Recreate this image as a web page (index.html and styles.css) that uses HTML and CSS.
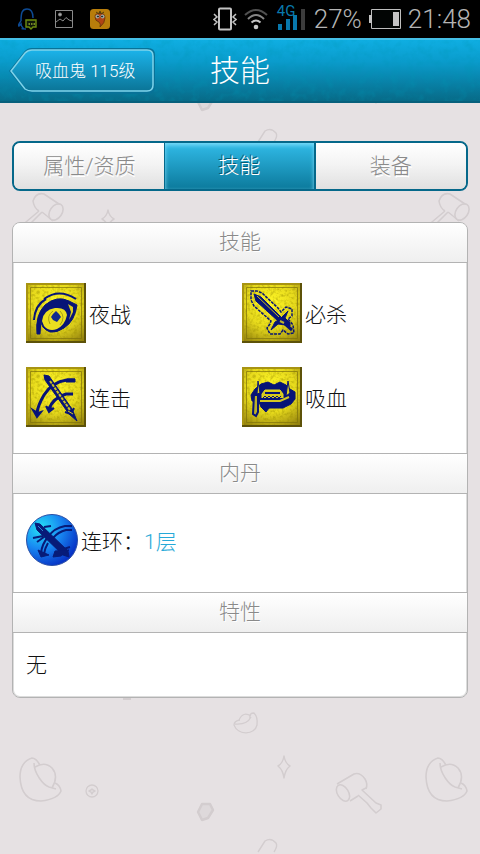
FILE: index.html
```html
<!doctype html>
<html lang="zh-CN">
<head>
<meta charset="utf-8" />
<meta name="viewport" content="width=device-width, initial-scale=1" />
<title>技能</title>
<link rel="stylesheet" href="styles.css">
</head>
<body>
<!-- gradients shared by the skill icons -->
<svg class="defs" width="0" height="0" aria-hidden="true">
  <defs>
    <radialGradient id="gold" cx=".48" cy=".35" r=".75">
      <stop offset="0" stop-color="#fff726"/>
      <stop offset=".55" stop-color="#e6d91c"/>
      <stop offset="1" stop-color="#94820f"/>
    </radialGradient>
    <filter id="grain" x="0" y="0" width="100%" height="100%">
      <feTurbulence type="fractalNoise" baseFrequency=".35" numOctaves="2" seed="4"/>
      <feColorMatrix values="0 0 0 0 .3  0 0 0 0 .25  0 0 0 0 0  1.2 0 0 0 -.52"/>
    </filter>
    <filter id="felt" x="0" y="0" width="100%" height="100%">
      <feTurbulence type="fractalNoise" baseFrequency=".12" numOctaves="3" seed="8"/>
      <feColorMatrix values="0 0 0 0 0  0 0 0 0 .3  0 0 0 0 .45  1.6 0 0 0 -.7"/>
    </filter>
    <g id="plate">
      <rect width="60" height="60" fill="url(#gold)"/>
      <rect width="60" height="60" filter="url(#grain)"/>
      <path d="M1 60V1H60" fill="none" stroke="#a89412" stroke-width="2"/>
      <path d="M0 59H59V0" fill="none" stroke="#5d5209" stroke-width="2"/>
      <path d="M4.500 55.500V4.500H55.500V55.500Z" fill="none" stroke="#7d700c" stroke-width="1" opacity=".7"/>
    </g>
  </defs>
</svg>

<div class="status">
  <div class="status-left">
    <svg width="20" height="22" viewBox="0 0 20 22" fill="none">
      <path d="M3 13C3 5 4 1 9 1s6 4 6 9M3 13c-2 2-3 5-2 5l2-2c0 2 1 3 2 4-2 1 0 1 3 1" stroke="#0d4a94" stroke-width="1.500"/>
      <path d="M8 12H18V19H15L13 21L11 19H8Z" fill="#10180a" stroke="#6d8d10" stroke-width="1.400"/>
      <path d="M10.500 16h1.500m1 0h1.500m1 0h1.500" stroke="#94ac30" stroke-width="1.500"/>
    </svg>
    <svg width="18" height="18" viewBox="0 0 18 18" fill="none" stroke="#8a8a8a">
      <path d="M.5 .5H17.500V17.500H.5Z"/>
      <path d="M1 12L5 9L8 11L11 7.500L14 10L17 11"/>
      <circle cx="5" cy="4.500" r="1.500" fill="#aaa"/>
    </svg>
    <svg width="20" height="20" viewBox="0 0 20 20">
      <rect width="20" height="20" rx="3.500" fill="#b87d0b"/>
      <path d="M5 8Q5 4 10 4Q15 4 15 9Q15 14 10 18Q11 15 9 13Q5 12 5 8Z" fill="#b04314" stroke="#573109" stroke-width=".7"/>
      <path d="M6 3l3 2 1-3 1 3 3-2" fill="none" stroke="#553d0d"/>
      <circle cx="7.500" cy="7.500" r="2" fill="#99a6a0"/><circle cx="12.500" cy="7.500" r="2" fill="#99a6a0"/>
      <circle cx="8" cy="7.500" r=".8"/><circle cx="12" cy="7.500" r=".8"/>
    </svg>
  </div>
  <div class="status-right">
    <svg width="24" height="24" viewBox="0 0 24 24" fill="none" stroke="#c4c4c4" stroke-width="1.500">
      <rect x="6" y="1.500" width="12" height="21" rx="1" stroke-width="2"/>
      <path d="M1 7l3 3-3 2.500 3 2.500-3 3M23 7l-3 3 3 2.500-3 2.500 3 3"/>
    </svg>
    <svg width="24" height="22" viewBox="0 0 24 22" fill="none" stroke-width="2">
      <path d="M1 7Q12-3 23 7" stroke="#505050"/>
      <path d="M4 11Q12 3 20 11" stroke="#858585"/>
      <path d="M7.500 14.500Q12 10.500 16.500 14.500" stroke="#c4c4c4"/>
      <circle cx="12" cy="19" r="2.300" fill="#c8c8c8"/>
    </svg>
    <div class="signal">
      <span>4G</span>
      <svg width="28" height="22" viewBox="0 0 28 22">
        <path d="M1 16h4v6H1zM9 11h4v11H9zM16 7h4v15h-4z" fill="#0878ad"/>
        <path d="M24 1h4v21h-4z" fill="#3c3c3c"/>
      </svg>
    </div>
    <span class="num">27%</span>
    <svg width="32" height="20" viewBox="0 0 32 20">
      <path d="M2.500 .5H31.500V19.500H2.500Z" fill="#020504" stroke="#bebebe"/>
      <path d="M0 6h3v8H0zM24 3h6v14h-6z" fill="#c4c4c4"/>
    </svg>
    <span class="num">21:48</span>
  </div>
</div>

<div class="page">
  <svg class="pattern" width="100%" height="100%" aria-hidden="true">
    <defs>
      <pattern id="doodles" y="75" width="406" height="710" patternUnits="userSpaceOnUse">
        <g fill="none" stroke="#d3cdcf" stroke-width="1.600" stroke-linejoin="round">
          <!-- mallets -->
          <path d="M337 671L354 661Q360 659 365 666Q368 671 366 676M350 688L358 683"/>
          <ellipse cx="343" cy="680" rx="5.500" ry="9" transform="rotate(-32 343 680)"/>
          <path d="M358 682L367 690L371 695L376 700L381 696V692L376 690L362 677L366 675"/>
          <path d="M59 91L44 81Q36 79 33 88Q34 95 39 98M47 103L53 108"/>
          <ellipse cx="56" cy="99" rx="6" ry="9" transform="rotate(35 56 99)"/>
          <path d="M39 98L20 114M42 99L27 114M42 99L47 103"/>
          <path d="M258 29L265 18Q271 14 276 20Q278 23 274 29" stroke-width="1.400"/>
          <!-- gold ingots -->
          <path d="M40 652Q36 645 32 645Q20 649 20 664Q21 688 41 688Q58 686 61 678Q60 672 55 670"/>
          <path d="M35 654Q45 648 52 655Q59 663 52 675M34 650C34 660 43 672 49 674L56 676"/>
          <path d="M240 607Q234 608 234 612C238 623 255 622 257 612Q258 604 254 600Q249 600 250 605M239 607Q243 598 251 603M235 611Q247 612 251 604" stroke-width="1.300"/>
          <!-- coin and sparkles -->
          <circle cx="92" cy="678" r="6" stroke-width="1.300"/>
          <path d="M92 676l1 1 2 1-2 1-1 2-1-2-2-1 2-1z" stroke-width="1.500"/>
          <path d="M284 643Q285 650 290 653Q285 657 284 665Q283 657 278 653Q283 650 284 643Z" stroke-width="1.500"/>
          <path d="M108 97Q109 103 114 106Q109 109 108 114Q107 109 102 106Q107 103 108 97Z" stroke-width="1.500"/>
          <!-- nut -->
          <path d="M202 691h8l3 6-5 8-6 2-4-8z" stroke-width="2.500" fill="#ded9db"/>
          <path d="M123 586h8" stroke-width="2"/>
        </g>
      </pattern>
    </defs>
    <rect width="100%" height="100%" fill="url(#doodles)"/>
  </svg>

  <header class="topbar">
    <svg class="felt" width="100%" height="100%" aria-hidden="true"><rect width="100%" height="100%" filter="url(#felt)"/></svg>
    <button class="back" type="button">
      <svg class="back-shape" viewBox="0 0 146 46" aria-hidden="true">
        <defs>
          <linearGradient id="backFill" x1="0" y1="0" x2="0" y2="1">
            <stop offset="0" stop-color="#1bb3ea"/>
            <stop offset="1" stop-color="#0b7597"/>
          </linearGradient>
        </defs>
        <path d="M0 23L15 4Q18 0 23 0H139Q146 0 146 7V38Q146 46 139 46H23Q18 46 15 42Z" fill="#087298"/>
        <path d="M2 23L16 5Q19 2 23 2H138Q144 2 144 8V37Q144 43 138 43H23Q19 43 16 41Z" fill="url(#backFill)" stroke="#7fd3ea" stroke-width="1.500"/>
      </svg>
      <span>吸血鬼 115级</span>
    </button>
    <h1>技能</h1>
  </header>

  <main>
    <nav class="tabs">
      <button type="button">属性/资质</button>
      <button type="button" class="active">技能</button>
      <button type="button">装备</button>
    </nav>

    <div class="card">
      <section>
        <h2>技能</h2>
        <ul class="skills">
          <li>
            <svg class="icon" viewBox="0 0 60 60" fill="none" stroke="#071477">
              <use href="#plate" stroke="none"/>
              <path d="M8 37Q9 22 20 16M18 16Q33 5 50 16" stroke-width="2"/>
              <path d="M11 51Q9 32 19 22Q31 12 43 18L51 22Q49 38 38 45Q31 50 24 49Q14 45 15 36L14 51Z" fill="#071477"/>
              <path d="M16 38Q17 27 29 25Q40 24 41 32Q39 42 31 46Q23 49 18 43Z" fill="#ebdf20" stroke="none"/>
              <path d="M24 41Q20 33 27 28M34 28Q40 34 34 42" stroke="#a8a013"/>
              <path d="M30 28L33 31L35 34L31 39L27 37L25 34L27 31Z" fill="#102a8e" stroke="none"/>
              <path d="M42 21L47 24L47 29L43 37L45 29Z" fill="#d9cc20" stroke="none"/>
            </svg>
            <span>夜战</span>
          </li>
          <li>
            <svg class="icon" viewBox="0 0 60 60" fill="none" stroke="#071477">
              <use href="#plate" stroke="none"/>
              <path d="M9 8L15 8L20 10L36 25L39 29L44 24L50 26L50 33L46 36L51 42L52 50L46 51L41 47L38 51L28 51L25 45L28 41L29 38L12 23L9 17Z" stroke-width="1.500" stroke-dasharray="3 1"/>
              <path d="M12 11L19 14L39 34L36 38L14 18Z" fill="#071477"/>
              <path d="M15 13L37 34" stroke="#c9bd1b"/>
              <path d="M46 28L43 35L48 40V43L44 42L36 41L29 47L33 39L38 36Z" fill="#071477"/>
              <path d="M42 40L50 47" stroke-width="3"/>
              <path d="M38 38L42 40" stroke="#beb32b" stroke-width="2"/>
            </svg>
            <span>必杀</span>
          </li>
          <li>
            <svg class="icon" viewBox="0 0 60 60" fill="none" stroke="#071477">
              <use href="#plate" stroke="none"/>
              <path d="M49 13H41Q26 15 18 28Q12 38 11 46" stroke-width="3"/>
              <path d="M41 12H49V15H40Z" fill="#071477"/>
              <path d="M7 43L11 50L15 45L12 46Z" fill="#071477" stroke-width="2"/>
              <path d="M47 27H40Q27 31 23 42" stroke-width="3"/>
              <path d="M20 39L23 45L28 41" fill="#071477" stroke-width="2"/>
              <path d="M18 8L23 9L46 42L51 54L43 47L19 13Z" fill="#071477"/>
              <path d="M24 14L44 43" stroke="#cfc321" stroke-width="2" stroke-dasharray="3 1"/>
              <path d="M39 45L45 47L48 41" stroke-width="2"/>
              <path d="M42 44L47 47" stroke="#d8cb21"/>
            </svg>
            <span>连击</span>
          </li>
          <li>
            <svg class="icon" viewBox="0 0 60 60" fill="none" stroke="#071477">
              <use href="#plate" stroke="none"/>
              <path d="M9 28L13 22L19 17L26 15L32 18L38 15L44 18L48 22L53 25L53 32L49 37L41 41L27 41L24 45L19 40L17 35L10 34Z" fill="#071477"/>
              <path d="M20 31V27L23 23H38L41 27V31" fill="#d6ca1b" stroke="#e5d921"/>
              <path d="M23 26H38" stroke-width="2"/>
              <path d="M21 31l2-2 2 2 2-2 2 2 2-2 2 2 2-2 2 2 2-2"/>
              <path d="M16 14L18 26L15 27ZM46 14L48 26L44 29Z" fill="#ddd01d"/>
              <path d="M12 28H16V45L14 49L11 47Z" fill="#bbb026" stroke-width="2"/>
              <path d="M18 34H38L47 30" stroke="#d4c722" stroke-width="2"/>
            </svg>
            <span>吸血</span>
          </li>
        </ul>
      </section>

      <section>
        <h2>内丹</h2>
        <div class="pill">
          <svg class="orb" viewBox="0 0 52 52" fill="none" stroke="#071b78">
            <defs>
              <radialGradient id="orbFill" cx=".28" cy=".27" r=".8">
                <stop offset="0" stop-color="#25e4f5"/>
                <stop offset=".5" stop-color="#1888f2"/>
                <stop offset="1" stop-color="#0630c4"/>
              </radialGradient>
            </defs>
            <circle cx="26" cy="26" r="25.500" fill="url(#orbFill)" stroke="#2b4fa6"/>
            <path d="M46 12H39Q28 14 22 23Q16 30 15 39" stroke-width="2"/>
            <path d="M46 16H40Q32 18 27 24M22 29Q19 34 18 40" stroke-width="2"/>
            <path d="M12 36L15 43L23 41Z" fill="#071b78"/>
            <path d="M9 9L14 10L42 37L43 43L37 41L11 16Z" fill="#071b78"/>
            <path d="M12 12L17 17" stroke="#2e86cf"/>
            <path d="M7 24L17 22M11 28L18 23M18 13L25 12M29 42L34 36L44 33" stroke-width="2"/>
            <path d="M29 37L27 43L35 42L43 36Z" fill="#071b78"/>
          </svg>
          <span>连环：<a href="#">1层</a></span>
        </div>
      </section>

      <section>
        <h2>特性</h2>
        <p class="trait">无</p>
      </section>
    </div>
  </main>
</div>
</body>
</html>
```
FILE: styles.css
```css
:root{
--teal:#05688a;
--page:#e6e1e3;
--line:#b3b3b3;
--muted:#8a8a8a;
}
*{box-sizing:border-box}
body{
margin:0;
min-height:100vh;
display:flex;
flex-direction:column;
background:var(--page);
color:#111;
font-family:Roboto,"Noto Sans CJK SC",sans-serif;
font-weight:300;
font-size:21px;
line-height:30px;
}
button{
margin:0; padding:0; border:0; background:none;
font:inherit; color:inherit; cursor:pointer;
}
h1,h2,p,ul{margin:0; padding:0; font-weight:inherit}
svg{display:block; flex:none}
.defs{position:absolute}

/* phone status bar */
.status{
height:38px;
padding:0 9px 0 18px;
display:flex; align-items:center; justify-content:space-between;
background:#000;
}
.status-left{display:flex; align-items:center; gap:17px}
.status-right{display:flex; align-items:center; gap:7px}
.num{font-size:26px; color:#b4b4b4}
.signal{position:relative; margin:0 2px}
.signal span{
position:absolute; left:0; top:-4px;
font-size:15px; line-height:15px; font-weight:400; color:#0878ad;
}

.page{position:relative; flex:1}
.pattern{position:absolute; inset:0; z-index:-1}

.topbar{
position:relative;
height:65px;
padding:0 9px;
display:grid; grid-template-columns:1fr auto 1fr; align-items:center;
background:linear-gradient(#0faee2, #0a9ccc 35%, #076a87);
border-top:2px solid #45bfe6;
border-bottom:2px solid #07607c;
color:#fff;
}
.felt{position:absolute; inset:0; opacity:.4}
.topbar h1{position:relative; grid-column:2; font-size:30px; line-height:40px}
.back{
position:relative;
justify-self:start;
width:146px; height:46px;
padding-left:26px;
text-align:left;
font-size:17px;
white-space:nowrap;
}
.back-shape{position:absolute; inset:0}
.back span{position:relative}

main{padding:38px 12px 24px}
.tabs{
display:grid; grid-template-columns:repeat(3,1fr);
height:50px;
border:2px solid var(--teal);
border-radius:8px;
overflow:hidden;
}
.tabs button{
background:linear-gradient(#fff, #f4f4f4 45%, #e0e0e0);
color:var(--muted);
text-shadow:1px 2px 0 #fff;
}
.tabs .active{
margin:0 -1px;
background:linear-gradient(#31bbe8, #0c7a9c);
border:solid var(--teal);
border-width:0 2px 0 1px;
box-shadow:inset 0 2px 4px #7fdcf8;
color:#fff;
text-shadow:-1px -1px 0 #0a5a75;
z-index:1;
}

.card{
margin-top:31px;
border:1px solid var(--line);
border-radius:8px;
background:#fff;
box-shadow:inset 0 0 0 1px #dcdcdc;
overflow:hidden;
}
.card h2{
height:40px;
font-size:21px; line-height:38px; text-align:center;
color:var(--muted);
text-shadow:1px 1px 0 #fff;
background:linear-gradient(#fff, #efefef);
border-bottom:1px solid var(--line);
}
.card section + section{border-top:1px solid var(--line)}
.skills{
list-style:none;
padding:20px 9px 26px 13px;
display:grid; grid-template-columns:1fr 1fr; gap:24px 0;
}
.skills li,.pill{display:flex; align-items:center; gap:3px}
.skills span,.pill span{padding-top:3px}
.icon{width:60px; height:60px}
.pill{padding:20px 13px 26px}
.orb{width:52px; height:52px}
.pill a{color:#27a9d8; text-decoration:none}
.trait{padding:17px 13px}
```
